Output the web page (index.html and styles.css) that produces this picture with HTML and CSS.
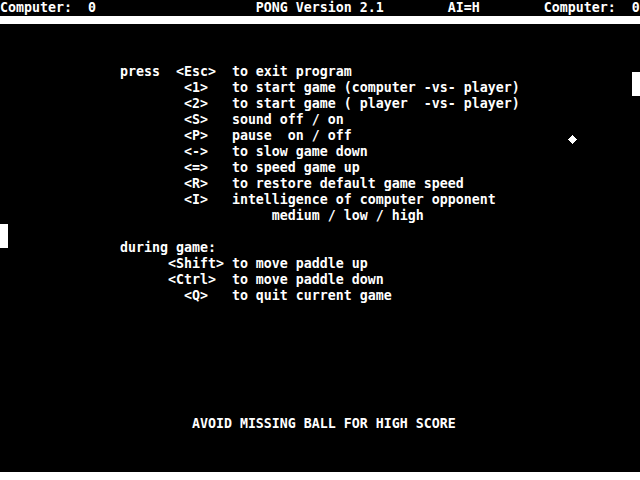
FILE: index.html
```html
<!DOCTYPE html>
<html>
<head>
<meta charset="utf-8">
<title>PONG Version 2.1</title>
<link rel="stylesheet" href="styles.css">
</head>
<body>
<div class="screen">
<div class="line header">Computer:  0                    PONG Version 2.1        AI=H        Computer:  0</div>
<div class="bar top-bar"></div>
<pre class="help">               press  &lt;Esc&gt;  to exit program
                       &lt;1&gt;   to start game (computer -vs- player)
                       &lt;2&gt;   to start game ( player  -vs- player)
                       &lt;S&gt;   sound off / on
                       &lt;P&gt;   pause  on / off
                       &lt;-&gt;   to slow game down
                       &lt;=&gt;   to speed game up
                       &lt;R&gt;   to restore default game speed
                       &lt;I&gt;   intelligence of computer opponent
                                  medium / low / high

               during game:
                     &lt;Shift&gt; to move paddle up
                     &lt;Ctrl&gt;  to move paddle down
                       &lt;Q&gt;   to quit current game</pre>
<div class="line message">                        AVOID MISSING BALL FOR HIGH SCORE</div>
<div class="bar bottom-bar"></div>
<div class="paddle paddle-left"></div>
<div class="paddle paddle-right"></div>
<svg class="ball" width="9" height="9" viewBox="0 0 9 9" shape-rendering="crispEdges"><polygon points="4.5,0 9,4.5 4.5,9 0,4.5" fill="#fff"/></svg>
</div>
</body>
</html>
```
FILE: styles.css
```css
html, body {
  margin: 0;
  padding: 0;
  background: #000;
}
.screen {
  position: relative;
  width: 640px;
  height: 480px;
  background: #000;
  color: #fff;
  font-family: "DejaVu Sans Mono", "Liberation Mono", monospace;
  font-weight: bold;
  font-size: 13.29px;
  line-height: 16px;
  display: flex;
  flex-direction: column;
  overflow: hidden;
}
.line {
  white-space: pre;
  height: 16px;
}
.bar {
  background: #fff;
  height: 8px;
  flex: none;
}
.help {
  margin: 40px 0 0 0;
  font: inherit;
  line-height: 16px;
  white-space: pre;
}
.message {
  margin-top: 112px;
}
.bottom-bar {
  margin-top: auto;
}
.paddle {
  position: absolute;
  width: 8px;
  height: 24px;
  background: #fff;
}
.paddle-left {
  left: 0;
  top: 224px;
}
.paddle-right {
  left: 632px;
  top: 72px;
}
.ball {
  position: absolute;
  left: 568px;
  top: 135px;
}
```
